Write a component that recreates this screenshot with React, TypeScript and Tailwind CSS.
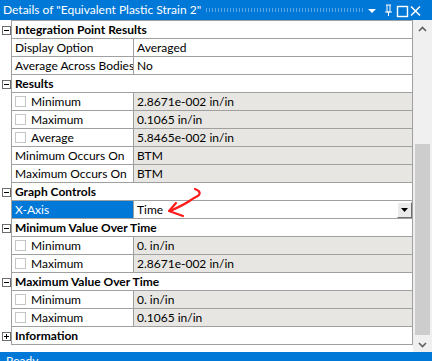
import React from 'react';

type RowDef =
  | { kind: 'header'; label: string; collapsed?: boolean }
  | { kind: 'prop'; label: string; value: string; check?: boolean; gray?: boolean; selected?: boolean; dropdown?: boolean };

const rows: RowDef[] = [
  { kind: 'header', label: 'Integration Point Results' },
  { kind: 'prop', label: 'Display Option', value: 'Averaged' },
  { kind: 'prop', label: 'Average Across Bodies', value: 'No' },
  { kind: 'header', label: 'Results' },
  { kind: 'prop', label: 'Minimum', value: '2.8671e-002 in/in', check: true, gray: true },
  { kind: 'prop', label: 'Maximum', value: '0.1065 in/in', check: true, gray: true },
  { kind: 'prop', label: 'Average', value: '5.8465e-002 in/in', check: true, gray: true },
  { kind: 'prop', label: 'Minimum Occurs On', value: 'BTM', gray: true },
  { kind: 'prop', label: 'Maximum Occurs On', value: 'BTM', gray: true },
  { kind: 'header', label: 'Graph Controls' },
  { kind: 'prop', label: 'X-Axis', value: 'Time', selected: true, dropdown: true },
  { kind: 'header', label: 'Minimum Value Over Time' },
  { kind: 'prop', label: 'Minimum', value: '0. in/in', check: true, gray: true },
  { kind: 'prop', label: 'Maximum', value: '2.8671e-002 in/in', check: true, gray: true },
  { kind: 'header', label: 'Maximum Value Over Time' },
  { kind: 'prop', label: 'Minimum', value: '0. in/in', check: true, gray: true },
  { kind: 'prop', label: 'Maximum', value: '0.1065 in/in', check: true, gray: true },
  { kind: 'header', label: 'Information', collapsed: true },
];

function ExpandBox({ collapsed }: { collapsed?: boolean }) {
  return (
    <div className="relative w-[9px] h-[9px] border border-[#6d6d6d] bg-white">
      <div className="absolute left-[1px] top-[3px] w-[5px] h-[1px] bg-black" />
      {collapsed && <div className="absolute left-[3px] top-[1px] w-[1px] h-[5px] bg-black" />}
    </div>
  );
}

function Row({ row }: { row: RowDef }) {
  if (row.kind === 'header') {
    return (
      <div className="flex h-[18px]">
        <div className="w-[11px] flex items-center justify-center pl-[1px] shrink-0">
          <ExpandBox collapsed={row.collapsed} />
        </div>
        <div className="flex-1 flex items-center border-l border-b border-r border-[#a0a0a0] pl-[3px] font-bold whitespace-nowrap">
          {row.label}
        </div>
      </div>
    );
  }
  return (
    <div className="flex h-[18px]">
      <div className="w-[11px] shrink-0" />
      <div
        className={`w-[122px] shrink-0 flex items-center border-l border-b border-[#a0a0a0] pl-[3px] whitespace-nowrap overflow-hidden ${
          row.selected ? 'bg-[#0078d7] text-white' : 'bg-white'
        }`}
      >
        {row.check && <div className="w-[11px] h-[11px] border border-[#c6c6c6] bg-white mr-[5px] shrink-0" />}
        {row.label}
      </div>
      <div
        className={`flex-1 flex items-center border-l border-b border-r border-[#a0a0a0] pl-[3px] whitespace-nowrap ${
          row.gray ? 'bg-[#e7e6e2]' : 'bg-white'
        }`}
      >
        <span className="flex-1">{row.value}</span>
        {row.dropdown && (
          <div className="w-[15px] h-[16px] mb-[-1px] bg-[#ebebeb] border-r border-b border-[#707070] border-t border-l border-t-white border-l-white flex items-center justify-center">
            <svg width="7" height="4" viewBox="0 0 7 4">
              <path d="M0 0h7L3.5 4z" fill="#000" />
            </svg>
          </div>
        )}
      </div>
    </div>
  );
}

export default function App() {
  return (
    <div
      className="relative w-[432px] h-[361px] bg-white overflow-hidden text-[12px] text-black"
      style={{ fontFamily: 'Lato, "Liberation Sans", sans-serif' }}
    >
      <div className="h-[20px] bg-[#0078d7] flex items-center pl-[3px] text-white text-[12px]">
        <span className="whitespace-nowrap">Details of "Equivalent Plastic Strain 2"</span>
        <div className="ml-[4px] flex-1 h-[4px] bg-[radial-gradient(circle,#5ba8e8_0.8px,transparent_1px)] bg-[length:3px_2px]" />
        <svg width="66" height="20" viewBox="0 0 66 20" className="ml-[2px] shrink-0">
          <path d="M2 9h8l-4 4z" fill="#fff" />
          <path d="M20 5h5M21 5v7h3V5M19 12h7M22.5 12v4" stroke="#fff" strokeWidth="1" fill="none" />
          <rect x="31.5" y="6.5" width="10" height="10" stroke="#fff" strokeWidth="1.4" fill="none" />
          <path d="M45 6.5l9 9M54 6.5l-9 9" stroke="#fff" strokeWidth="1.5" />
        </svg>
      </div>

      <div className="flex">
        <div className="w-[413px] shrink-0">
          <div className="ml-[11px] h-[1px] bg-[#a0a0a0]" />
          {rows.map((r, i) => (
            <Row key={i} row={r} />
          ))}
        </div>
        <div className="w-[19px] h-[332px] bg-[#f0f0f0] flex flex-col items-center">
          <svg width="9" height="6" viewBox="0 0 9 6" className="mt-[6px]">
            <path d="M1 5l3.5-3.5L8 5" stroke="#606060" strokeWidth="1.6" fill="none" />
          </svg>
          <div className="mt-[112px] w-[15px] h-[191px] bg-[#cdcdcd]" />
          <svg width="9" height="6" viewBox="0 0 9 6" className="mt-[7px]">
            <path d="M1 1l3.5 3.5L8 1" stroke="#606060" strokeWidth="1.6" fill="none" />
          </svg>
        </div>
      </div>

      <div className="absolute left-0 top-[352px] w-full h-[9px] bg-[#0078d7] text-white pl-[6px] text-[12px] leading-[18px] overflow-hidden">
        Ready
      </div>

      <svg className="absolute left-[160px] top-[185px]" width="50" height="40" viewBox="0 0 50 40">
        <path
          d="M35 4c3 1 6 3 4 6-2 2-6 3-8 5-6 4-14 8-21 11"
          stroke="#ff1a1a"
          strokeWidth="2.2"
          fill="none"
          strokeLinecap="round"
        />
        <path d="M16 18l-7 8 14 5" stroke="#ff1a1a" strokeWidth="2.2" fill="none" strokeLinecap="round" strokeLinejoin="round" />
      </svg>
    </div>
  );
}
